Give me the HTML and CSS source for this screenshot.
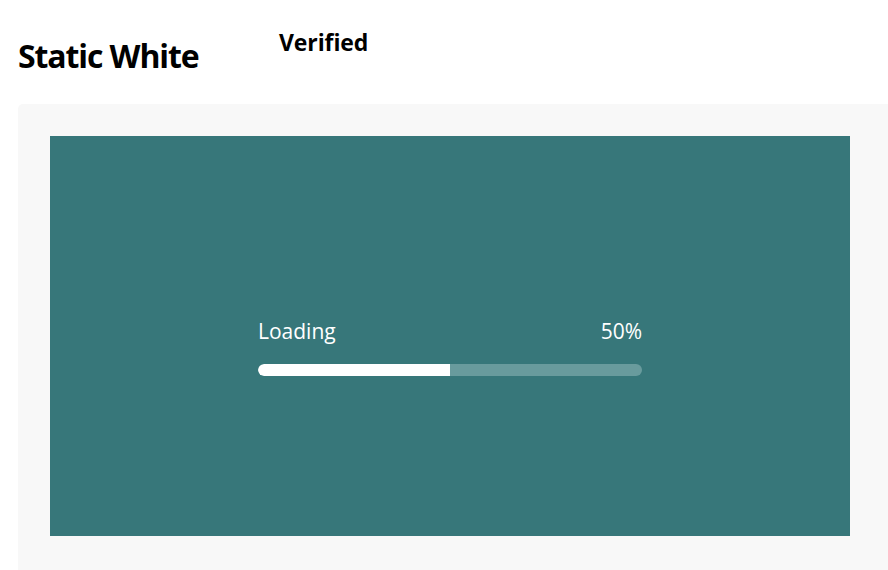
FILE: index.html
```html
<!DOCTYPE html>
<html>
<head>
<meta charset="utf-8">
<link rel="stylesheet" href="styles.css">
</head>
<body>
<div class="page">
  <div class="header">
    <h2 class="title">Static White</h2>
    <span class="status">Verified</span>
  </div>
  <div class="stage">
    <div class="canvas">
      <div class="progress">
        <div class="progress-labels">
          <span class="label">Loading</span>
          <span class="value">50%</span>
        </div>
        <div class="track"><div class="fill" style="width:50%"></div></div>
      </div>
    </div>
  </div>
</div>
</body>
</html>
```
FILE: styles.css
```css
html, body {
  margin: 0;
  padding: 0;
  background: #ffffff;
  overflow: hidden;
}
body {
  font-family: "Open Sans", "Liberation Sans", sans-serif;
  color: #000;
}
.page {
  padding-left: 18px;
}
.header {
  display: flex;
  align-items: flex-start;
  height: 104px;
}
.title {
  margin: 0;
  padding-top: 34px;
  font-size: 32px;
  font-weight: 700;
  line-height: 44px;
  letter-spacing: -1.1px;
  width: 261px;
}
.status {
  padding-top: 26px;
  font-size: 23px;
  font-weight: 700;
  line-height: 32px;
  letter-spacing: -0.1px;
}
.stage {
  background: #f8f8f8;
  border-top-left-radius: 5px;
  padding: 32px 32px 34px 32px;
}
.canvas {
  width: 800px;
  height: 400px;
  background: #37777a;
  display: flex;
  align-items: center;
  justify-content: center;
}
.progress {
  width: 384px;
  margin-top: 20px;
}
.progress-labels {
  display: flex;
  justify-content: space-between;
  color: #ffffff;
  font-size: 21px;
  line-height: 28px;
  margin-bottom: 19px;
}
.track {
  height: 12px;
  border-radius: 6px;
  background: #699b9d;
  overflow: hidden;
}
.fill {
  height: 100%;
  background: #ffffff;
  border-radius: 6px 0 0 6px;
}
```
